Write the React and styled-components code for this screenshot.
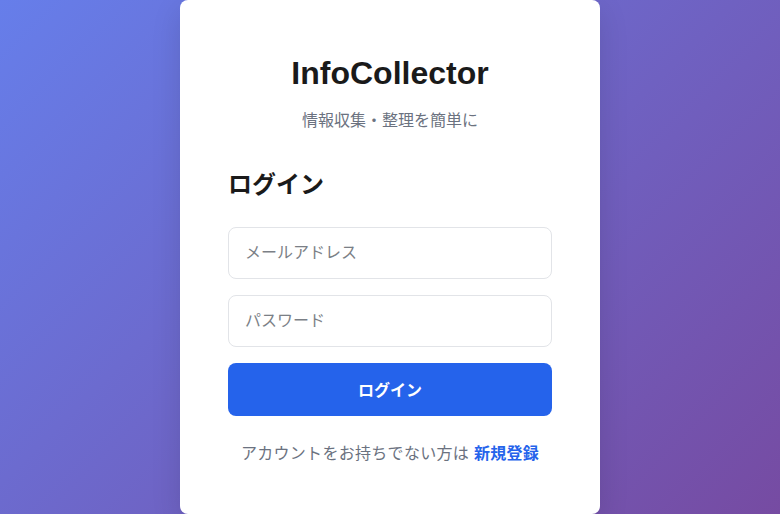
import React from 'react'
import styled, { createGlobalStyle } from 'styled-components'

const GlobalStyle = createGlobalStyle`
    * { box-sizing: border-box; }
    html, body { margin: 0; padding: 0; }
    body {
        font-family: "Liberation Sans", "Noto Sans CJK JP", sans-serif;
        line-height: 1.5;
        color: #1f2937;
    }
`

const Page = styled.div`
    min-height: 100vh;
    display: flex;
    align-items: center;
    justify-content: center;
    background: linear-gradient(135deg, #667eea 0%, #764ba2 100%);
`

const Card = styled.div`
    width: 420px;
    background: #fff;
    border-radius: 8px;
    padding: 48px;
    box-shadow: 0 10px 30px rgba(0, 0, 0, 0.12);
`

const Header = styled.div`
    text-align: center;
    margin-bottom: 34px;
`

const Title = styled.h1`
    margin: 1px 0 12px;
    font-size: 32px;
    line-height: 48px;
    font-weight: 700;
    color: #1a1a1a;
`

const Subtitle = styled.p`
    margin: 0;
    font-size: 16px;
    line-height: 24px;
    color: #6b7280;
`

const Heading = styled.h2`
    margin: 0 0 24px;
    font-size: 24px;
    line-height: 36px;
    font-weight: 700;
    color: #1a1a1a;
`

const Form = styled.form`
    display: flex;
    flex-direction: column;
    gap: 16px;
`

const Input = styled.input`
    width: 100%;
    height: 52px;
    padding: 0 16px;
    border: 1px solid #e2e4e8;
    border-radius: 8px;
    font-family: inherit;
    font-size: 16px;
    color: #1f2937;
    outline: none;
    &::placeholder { color: #7b7f86; }
`

const Button = styled.button`
    height: 53px;
    padding-bottom: 3px;
    border: none;
    border-radius: 8px;
    background: #2563eb;
    color: #fff;
    font-family: inherit;
    font-size: 16px;
    font-weight: 700;
    cursor: pointer;
`

const Footer = styled.p`
    margin: 26px 0 0;
    text-align: center;
    font-size: 16px;
    line-height: 24px;
    color: #6b7280;
    letter-spacing: 0.3px;
`

const Link = styled.a`
    color: #2563eb;
    font-weight: 700;
    text-decoration: none;
`

export default function App() {
    return (
        <Page>
            <GlobalStyle />
            <Card>
                <Header>
                    <Title>InfoCollector</Title>
                    <Subtitle>情報収集・整理を簡単に</Subtitle>
                </Header>
                <Heading>ログイン</Heading>
                <Form onSubmit={e => e.preventDefault()}>
                    <Input type="email" placeholder="メールアドレス" />
                    <Input type="password" placeholder="パスワード" />
                    <Button type="submit">ログイン</Button>
                </Form>
                <Footer>
                    アカウントをお持ちでない方は <Link href="#">新規登録</Link>
                </Footer>
            </Card>
        </Page>
    )
}
